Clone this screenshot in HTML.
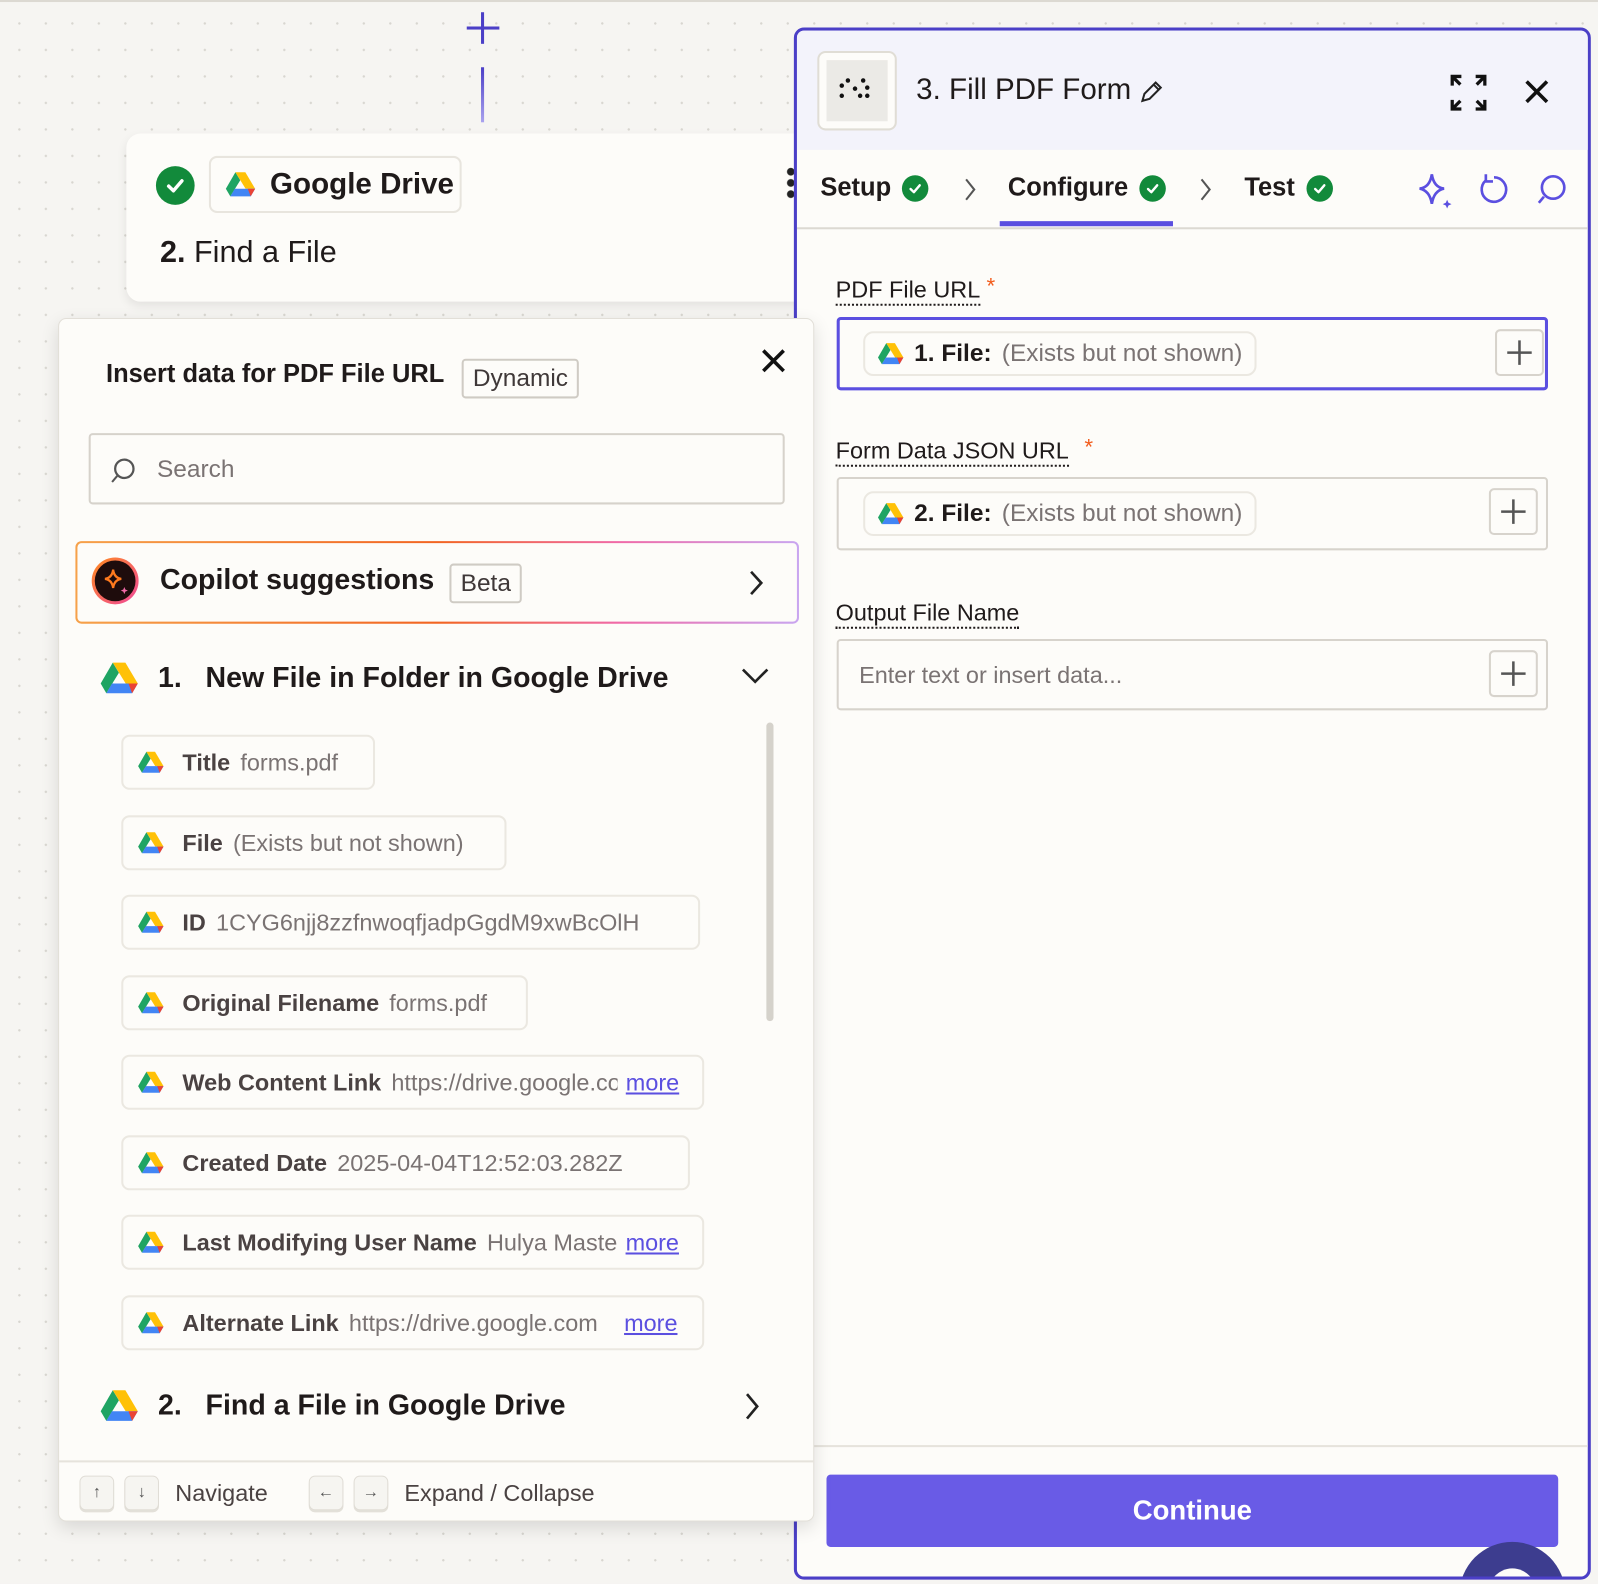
<!DOCTYPE html>
<html><head><meta charset="utf-8">
<style>
*{box-sizing:border-box;margin:0;padding:0}
html,body{width:1598px;height:1584px;overflow:hidden;background:#f6f5f2}
body{font-family:"Liberation Sans",sans-serif;color:#1f1a1a}
#w{position:absolute;left:0;top:0;width:1568px;height:1554px;transform:scale(1.0191);transform-origin:0 0;
background-color:#f6f5f2;background-image:radial-gradient(#d8d6d0 1px,transparent 1.3px);background-size:26px 26px;background-position:6px 10px}
.abs{position:absolute}
.topline{left:0;top:0;width:1568px;height:2px;background:#dcd9d2}
.card{left:124px;top:131px;width:680px;height:165px;background:#fdfcf9;border-radius:14px;box-shadow:0 4px 10px rgba(0,0,0,.08)}
.chk{width:38px;height:38px;border-radius:50%;background:#128a3b;display:flex;align-items:center;justify-content:center}
.pop{left:57px;top:312px;width:742px;height:1181px;background:#fdfcf9;border:1px solid #e2dfd8;border-radius:8px;box-shadow:0 6px 18px rgba(0,0,0,.12);z-index:5}
.panel{left:779px;top:27px;width:782px;height:1523px;background:#fdfcf9;border:3px solid #4b3fc7;border-radius:10px;overflow:hidden;z-index:2}
.chip{position:absolute;left:61px;height:54px;border:2px solid #ebe8e1;border-radius:8px;background:#fdfcf9;display:flex;align-items:center;padding-left:14px;font-size:23px;white-space:nowrap;overflow:hidden}
.chip b{color:#4a4242;margin-left:18px;margin-right:10px}
.chip span{color:#7a7373}
.chip .more{color:#5b4fe0;text-decoration:underline;margin-left:8px}
.lbl{position:absolute;left:38px;font-size:23px;color:#1f1a1a;border-bottom:2px dotted #1f1a1a;padding-bottom:1px;line-height:26px}
.star{position:absolute;color:#f25c1c;font-size:22px}
.fld{position:absolute;left:39px;width:698px;height:72px;border:2px solid #d7d3cc;border-radius:4px;background:#fdfcf9}
.fchip{position:absolute;left:24px;top:12px;height:44px;border:2px solid #ebe8e1;border-radius:10px;display:flex;align-items:center;padding:0 12px;font-size:24px;white-space:nowrap}
.plus{position:absolute;right:8px;top:9px;width:48px;height:46px;border:2px solid #d7d3cc;border-radius:5px;display:flex;align-items:center;justify-content:center}
.key{display:inline-flex;width:34px;height:34px;border:1px solid #e0ddd6;border-radius:6px;align-items:center;justify-content:center;font-size:16px;color:#555;background:#f6f5f1;box-shadow:0 2px 0 #e3e0d9}
</style></head><body>
<svg width="0" height="0" style="position:absolute"><defs>
<symbol id="gd" viewBox="0 0 24 21">
<path d="M8 0.5 L0.5 13.5 L4 19.5 L11.8 6.8 Z" fill="#1fa463"/>
<path d="M8 0.5 L15.8 0.5 L23.5 13.5 L16 13.5 Z" fill="#ffc107"/>
<path d="M4 19.5 L20 19.5 L23.5 13.5 L7.5 13.5 Z" fill="#4285f4"/>
<path d="M20 19.5 L23.5 13.5 L17.7 13.5 Z" fill="#ea4335"/>
</symbol>
<symbol id="ck" viewBox="0 0 20 20"><path d="M5 10.5 L8.6 14 L15 6.5" stroke="#fff" stroke-width="2.6" fill="none" stroke-linecap="round" stroke-linejoin="round"/></symbol>
</defs></svg>
<div id="w">
<div class="abs topline"></div>
<div class="abs" style="left:458px;top:26px;width:32px;height:3px;background:#4b3fc7"></div>
<div class="abs" style="left:472px;top:12px;width:3px;height:31px;background:#4b3fc7"></div>
<div class="abs" style="left:472px;top:66px;width:3px;height:54px;background:linear-gradient(#4b3fc7,#a9a2ee)"></div>

<div class="abs card">
  <div class="abs chk" style="left:29px;top:32px"><svg width="26" height="26"><use href="#ck"/></svg></div>
  <div class="abs" style="left:81px;top:22px;width:248px;height:56px;border:2px solid #e8e5de;border-radius:8px;display:flex;align-items:center;padding-left:14px;font-size:29px;font-weight:bold;color:#1f1a1a">
    <svg width="30" height="27" style="margin-right:14px"><use href="#gd"/></svg>Google Drive</div>
  <div class="abs" style="left:33px;top:100px;font-size:30px;color:#1f1a1a"><b>2.</b> Find a File</div>
  <div class="abs" style="left:648px;top:32px;width:8px;height:32px;background:radial-gradient(circle,#222 3.5px,transparent 4px) 0 0/8px 11px"></div>
</div>

<div class="abs pop">
  <div class="abs" style="left:46px;top:40px;font-size:25px;font-weight:bold;color:#1f1a1a">Insert data for PDF File URL</div>
  <div class="abs" style="left:395px;top:39px;height:39px;padding:0 9px;border:2px solid #cfcbc4;border-radius:4px;font-size:24px;color:#3f3838;line-height:35px">Dynamic</div>
  <svg class="abs" style="left:688px;top:28px" width="26" height="26"><path d="M3 3L23 23M23 3L3 23" stroke="#111" stroke-width="3.5"/></svg>
  <div class="abs" style="left:29px;top:112px;width:683px;height:70px;border:2px solid #d6d2cb;border-radius:4px">
    <svg class="abs" style="left:16px;top:20px" width="30" height="30"><circle cx="17" cy="13" r="9" stroke="#555" stroke-width="2.2" fill="none"/><path d="M10 20L5 26" stroke="#555" stroke-width="2"/></svg>
    <div class="abs" style="left:65px;top:20px;font-size:24px;color:#7a7373">Search</div>
  </div>
  <div class="abs" style="left:16px;top:218px;width:710px;height:81px;border-radius:6px;padding:2px;background:linear-gradient(90deg,#f6a14a,#f26522 50%,#f06aa8 75%,#c9a6f0)">
    <div style="width:100%;height:100%;background:#fdfcf9;border-radius:4px;position:relative">
      <div class="abs" style="left:14px;top:14px;width:46px;height:46px;border-radius:50%;background:linear-gradient(135deg,#ff8a1e,#f0489a);padding:3px"><div style="width:100%;height:100%;border-radius:50%;background:#1e0c0c;position:relative">
        <svg class="abs" style="left:6px;top:6px" width="30" height="30"><path d="M12 3 Q13 11 20 12 Q13 13 12 21 Q11 13 4 12 Q11 11 12 3Z" stroke="#ff7a1e" stroke-width="2.2" fill="none"/><path d="M23 20 l1 2.5 2.5 1 -2.5 1 -1 2.5 -1-2.5 -2.5-1 2.5-1z" fill="#f06aa8"/></svg></div></div>
      <div class="abs" style="left:81px;top:20px;font-size:28px;font-weight:bold;color:#1f1a1a">Copilot suggestions</div>
      <div class="abs" style="left:365px;top:20px;height:39px;padding:0 9px;border:2px solid #cfcbc4;border-radius:4px;font-size:24px;color:#3f3838;line-height:35px">Beta</div>
      <svg class="abs" style="left:656px;top:25px" width="20" height="28"><path d="M5 3L15 14L5 25" stroke="#222" stroke-width="2.6" fill="none"/></svg>
    </div>
  </div>
  <svg class="abs" style="left:40px;top:336px" width="38" height="34"><use href="#gd"/></svg>
  <div class="abs" style="left:97px;top:336px;font-size:28px;font-weight:bold;color:#1f1a1a">1.&nbsp;&nbsp; New File in Folder in Google Drive</div>
  <svg class="abs" style="left:668px;top:340px" width="30" height="20"><path d="M3 4L15 16L27 4" stroke="#222" stroke-width="2.6" fill="none"/></svg>
  <div class="abs" style="left:694px;top:396px;width:7px;height:293px;border-radius:4px;background:#d5d2cb"></div>

  <div class="chip" style="top:408px;width:249px"><svg width="26" height="23"><use href="#gd"/></svg><b>Title</b><span>forms.pdf</span></div>
  <div class="chip" style="top:487px;width:378px"><svg width="26" height="23"><use href="#gd"/></svg><b>File</b><span>(Exists but not shown)</span></div>
  <div class="chip" style="top:565px;width:568px"><svg width="26" height="23"><use href="#gd"/></svg><b>ID</b><span>1CYG6njj8zzfnwoqfjadpGgdM9xwBcOlH</span></div>
  <div class="chip" style="top:644px;width:399px"><svg width="26" height="23"><use href="#gd"/></svg><b>Original Filename</b><span>forms.pdf</span></div>
  <div class="chip" style="top:722px;width:572px"><svg width="26" height="23"><use href="#gd"/></svg><b>Web Content Link</b><span style="width:222px;overflow:hidden;display:inline-block">https://drive.google.com</span><span class="more">more</span></div>
  <div class="chip" style="top:801px;width:558px"><svg width="26" height="23"><use href="#gd"/></svg><b>Created Date</b><span>2025-04-04T12:52:03.282Z</span></div>
  <div class="chip" style="top:879px;width:572px"><svg width="26" height="23"><use href="#gd"/></svg><b>Last Modifying User Name</b><span style="width:128px;overflow:hidden;display:inline-block">Hulya Masters</span><span class="more">more</span></div>
  <div class="chip" style="top:958px;width:572px"><svg width="26" height="23"><use href="#gd"/></svg><b>Alternate Link</b><span style="width:262px;overflow:hidden;display:inline-block">https://drive.google.com</span><span class="more">more</span></div>

  <svg class="abs" style="left:40px;top:1050px" width="38" height="34"><use href="#gd"/></svg>
  <div class="abs" style="left:97px;top:1050px;font-size:28px;font-weight:bold;color:#1f1a1a">2.&nbsp;&nbsp; Find a File in Google Drive</div>
  <svg class="abs" style="left:670px;top:1052px" width="20" height="30"><path d="M5 3L15 15L5 27" stroke="#222" stroke-width="2.6" fill="none"/></svg>
  <div class="abs" style="left:0;top:1120px;width:740px;height:2px;background:#e6e3dc"></div>
  <div class="abs" style="left:20px;top:1135px;display:flex;align-items:center;gap:10px;font-size:23px;color:#4a4242">
    <span class="key">↑</span><span class="key">↓</span><span style="margin-left:6px;margin-right:30px">Navigate</span>
    <span class="key">←</span><span class="key">→</span><span style="margin-left:6px">Expand / Collapse</span></div>
</div>

<div class="abs panel">
  <div class="abs" style="left:0;top:0;width:780px;height:117px;background:#f3f3fb"></div>
  <div class="abs" style="left:20px;top:20px;width:78px;height:78px;border:2px solid #e0ddd5;border-radius:8px;background:#fdfcf9;padding:7px"><div style="width:100%;height:100%;background:#ebeae6;position:relative">
    <svg class="abs" style="left:11px;top:17px" width="40" height="30"><g fill="#111"><circle cx="4" cy="8" r="2.2"/><circle cx="10" cy="3" r="2.2"/><circle cx="17" cy="11" r="2.2"/><circle cx="25" cy="3" r="2.2"/><circle cx="29" cy="10" r="2.2"/><circle cx="4" cy="18" r="2.2"/><circle cx="22" cy="18" r="2.2"/><circle cx="29" cy="18" r="2.2"/></g></svg></div></div>
  <div class="abs" style="left:117px;top:42px;font-size:29px;color:#1f1a1a">3. Fill PDF Form</div>
  <svg class="abs" style="left:335px;top:47px" width="26" height="26"><path d="M4 22L6 15L17 4L22 9L11 20Z M15 6L20 11" stroke="#222" stroke-width="2" fill="none"/></svg>
  <svg class="abs" style="left:640px;top:42px" width="38" height="38"><g stroke="#111" stroke-width="3.2" fill="none"><path d="M3 12V3H12M3 3L11 11"/><path d="M26 3H35V12M35 3L27 11"/><path d="M3 26V35H12M3 35L11 27"/><path d="M35 26V35H26M35 35L27 27"/></g></svg>
  <svg class="abs" style="left:713px;top:47px" width="26" height="26"><path d="M3 3L23 23M23 3L3 23" stroke="#111" stroke-width="3.5"/></svg>
  <div class="abs" style="left:23px;top:140px;display:flex;align-items:center;font-size:25px;font-weight:bold;color:#1f1a1a">Setup<span class="chk" style="width:26px;height:26px;margin-left:11px"><svg width="18" height="18"><use href="#ck"/></svg></span></div>
  <svg class="abs" style="left:163px;top:144px" width="14" height="24"><path d="M3 2L11 12L3 22" stroke="#555" stroke-width="2" fill="none"/></svg>
  <div class="abs" style="left:207px;top:140px;display:flex;align-items:center;font-size:25px;font-weight:bold;color:#1f1a1a">Configure<span class="chk" style="width:26px;height:26px;margin-left:11px"><svg width="18" height="18"><use href="#ck"/></svg></span></div>
  <div class="abs" style="left:199px;top:187px;width:170px;height:5px;background:#5b4fe0"></div>
  <svg class="abs" style="left:394px;top:144px" width="14" height="24"><path d="M3 2L11 12L3 22" stroke="#555" stroke-width="2" fill="none"/></svg>
  <div class="abs" style="left:439px;top:140px;display:flex;align-items:center;font-size:25px;font-weight:bold;color:#1f1a1a">Test<span class="chk" style="width:26px;height:26px;margin-left:11px"><svg width="18" height="18"><use href="#ck"/></svg></span></div>
  <svg class="abs" style="left:608px;top:138px" width="40" height="40"><path d="M15 3 Q17 16 27 17 Q17 19 15 32 Q13 19 3 17 Q13 16 15 3Z" stroke="#5b4fe0" stroke-width="2.6" fill="none"/><path d="M30 28 l1.3 3 3 1.3 -3 1.3 -1.3 3 -1.3-3 -3-1.3 3-1.3z" fill="#5b4fe0"/></svg>
  <svg class="abs" style="left:666px;top:138px" width="36" height="38"><path d="M10 9 A12 12 0 1 0 18 6 M10 3 V10 H17" stroke="#5b4fe0" stroke-width="2.6" fill="none"/></svg>
  <svg class="abs" style="left:722px;top:138px" width="36" height="38"><circle cx="20" cy="16" r="11" stroke="#5b4fe0" stroke-width="2.6" fill="none"/><path d="M11 25L6 31" stroke="#5b4fe0" stroke-width="2.6"/></svg>
  <div class="abs" style="left:0;top:193px;width:780px;height:2px;background:#dcd9d2"></div>

  <div class="lbl" style="top:241px">PDF File URL</div><div class="star" style="left:186px;top:238px">*</div>
  <div class="fld" style="top:281px;height:72px;border:3px solid #5b4fe0">
    <div class="fchip" style="left:23px;top:11px"><svg width="26" height="23" style="margin-right:10px"><use href="#gd"/></svg><b>1. File:</b><span style="color:#7a7373;margin-left:10px">(Exists but not shown)</span></div>
    <div class="plus" style="top:9px;right:1px"><svg width="26" height="26"><path d="M13 1V25M1 13H25" stroke="#555" stroke-width="2.5"/></svg></div>
  </div>
  <div class="lbl" style="top:399px">Form Data JSON URL</div><div class="star" style="left:282px;top:396px">*</div>
  <div class="fld" style="top:438px">
    <div class="fchip"><svg width="26" height="23" style="margin-right:10px"><use href="#gd"/></svg><b>2. File:</b><span style="color:#7a7373;margin-left:10px">(Exists but not shown)</span></div>
    <div class="plus"><svg width="26" height="26"><path d="M13 1V25M1 13H25" stroke="#555" stroke-width="2.5"/></svg></div>
  </div>
  <div class="lbl" style="top:558px">Output File Name</div>
  <div class="fld" style="top:597px;height:70px">
    <div class="abs" style="left:20px;top:20px;font-size:23px;color:#7a7373">Enter text or insert data...</div>
    <div class="plus" style="top:9px"><svg width="26" height="26"><path d="M13 1V25M1 13H25" stroke="#555" stroke-width="2.5"/></svg></div>
  </div>

  <div class="abs" style="left:0;top:1388px;width:780px;height:2px;background:#e6e3dc"></div>
  <div class="abs" style="left:29px;top:1417px;width:718px;height:71px;background:#695be6;border-radius:4px;color:#fff;font-size:27px;font-weight:bold;text-align:center;line-height:71px">Continue</div>
  <div class="abs" style="left:650px;top:1483px;width:104px;height:104px;border-radius:50%;background:#3d3d8f"><div style="position:absolute;left:26px;top:26px;width:52px;height:60px;border-radius:50%;background:#fdfcf9"></div></div>
</div>
</div>
</body></html>
